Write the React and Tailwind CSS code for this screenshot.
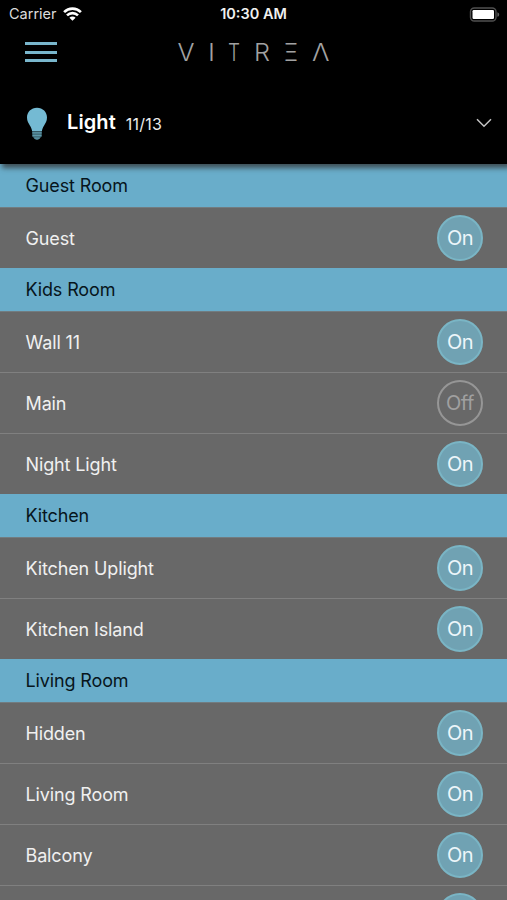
import clsx from 'clsx';

const rooms = [
    { name: 'Guest Room', lights: [{ name: 'Guest', on: true }] },
    {
        name: 'Kids Room',
        lights: [
            { name: 'Wall 11', on: true },
            { name: 'Main', on: false },
            { name: 'Night Light', on: true },
        ],
    },
    {
        name: 'Kitchen',
        lights: [
            { name: 'Kitchen Uplight', on: true },
            { name: 'Kitchen Island', on: true },
        ],
    },
    {
        name: 'Living Room',
        lights: [
            { name: 'Hidden', on: true },
            { name: 'Living Room', on: true },
            { name: 'Balcony', on: true },
            { name: '', on: true },
        ],
    },
];

// x and drawn width of each letter in the wordmark
const wordmark = [
    { char: 'V', x: 1.5, width: 17 },
    { char: 'I', x: 32, width: 7 },
    { char: 'T', x: 52, width: 12 },
    { char: 'R', x: 78, width: 16 },
    { char: 'Ξ', x: 108, width: 14 },
    { char: 'Λ', x: 136, width: 17.5 },
];

function StatusBar() {
    return (
        <div className="grid h-7 grid-cols-3 items-center pr-[7px] pl-[9px] text-[14.5px] leading-7">
            <div className="flex items-center gap-[6px] text-[#dcdcdc]">
                <span>Carrier</span>
                <svg width="19" height="14" viewBox="0 0 19 14" fill="none" stroke="#fff" strokeWidth="2.6">
                    <path d="M1.1 5.1a11.9 11.9 0 0 1 16.8 0" />
                    <path d="M4 8.4a7.8 7.8 0 0 1 11 0" />
                    <path d="M9.5 13.8 6.4 10.700a4.400 4.400 0 0 1 6.200 0z" fill="#fff" stroke="none" />
                </svg>
            </div>
            <span className="-ml-[2px] text-center text-[14.5px] font-semibold text-[#f0f0f0]">10:30 AM</span>
            <svg className="justify-self-end" width="31" height="15" viewBox="0 0 31 15">
                <rect x="1.500" y="1" width="25.500" height="13" rx="3.800" fill="none" stroke="#505050" strokeWidth="1.400" />
                <rect x="3.500" y="3" width="21.500" height="9" rx="1.200" fill="#fff" />
                <path d="M28.400 5.200c2.400.8 2.400 3.800 0 4.600z" fill="#606060" />
            </svg>
        </div>
    );
}

function Wordmark() {
    return (
        <svg className="overflow-visible" width="156" height="36" viewBox="0 0 156 36" role="img" aria-label="Vitrea">
            {wordmark.map(({ char, x, width }) => (
                <text
                    key={char}
                    x={x}
                    y="27.3"
                    textLength={width}
                    lengthAdjust="spacingAndGlyphs"
                    className="fill-[#a2a2a2] text-[24.5px] font-light"
                >
                    {char}
                </text>
            ))}
        </svg>
    );
}

function BulbIcon() {
    return (
        <svg width="22" height="34" viewBox="0 0 22 34">
            <path
                d="M11 .8C5.200.8 1 5 1 10.600c0 3.400 1.500 5.800 3 8.100 1.200 1.900 1.800 3.400 2.100 5.500h9.800c.3-2.100.9-3.600 2.100-5.500 1.500-2.300 3-4.700 3-8.100C21 5 16.800.8 11 .8z"
                fill="#74bad3"
            />
            <path d="M6.300 24.200h9.400v5.300l-2.700 2.500-1 1h-2l-1-1-2.700-2.500z" fill="#3c6470" />
            <path d="M6.300 25.800h9.400M6.500 28.500h9M8.300 31.200h5.400" stroke="#5d98a9" strokeWidth="1.300" />
        </svg>
    );
}

function LightButton({ on }) {
    return (
        <button
            type="button"
            className={clsx(
                'flex size-[46px] shrink-0 items-center justify-center rounded-full border-2 text-[20px] tracking-tight',
                on ? 'border-[#7ab5c5] bg-[#70a2b3] text-[#edf6fa]' : 'border-[#969696] text-[#a0a0a0]'
            )}
        >
            {on ? 'On' : 'Off'}
        </button>
    );
}

export default function App() {
    return (
        <div className="flex h-[900px] w-[507px] flex-col overflow-hidden bg-[#686868] font-['Inter','Liberation_Sans',sans-serif]">
            <header className="relative z-10 h-[164px] shrink-0 bg-black text-white shadow-[3px_3px_5px_1px_rgba(50,50,50,0.75)]">
                <StatusBar />
                <div className="grid h-12 grid-cols-[1fr_156px_1fr] items-center px-[25px]">
                    <button type="button" aria-label="Menu" className="flex w-[32px] flex-col gap-[5.500px]">
                        <span className="h-[3px] bg-[#79b6cc]" />
                        <span className="h-[3px] bg-[#79b6cc]" />
                        <span className="h-[3px] bg-[#79b6cc]" />
                    </button>
                    <Wordmark />
                </div>
                <div className="flex h-24 items-center pr-[15px] pl-[26px]">
                    <BulbIcon />
                    <h1 className="ml-[19px] pb-1 text-[20px] font-semibold tracking-[0.1px]">Light</h1>
                    <span className="ml-[10px] pb-px text-[16px] tracking-[0.2px] text-[#ececec]">11/13</span>
                    <svg className="mb-[3px] ml-auto" width="16" height="10" viewBox="0 0 16 10" fill="none" stroke="#c4c4c4" strokeWidth="1.500">
                        <path d="M1 1.200l7 7 7-7" />
                    </svg>
                </div>
            </header>

            <main>
                {rooms.map((room) => (
                    <section key={room.name}>
                        <h2 className="h-[43px] bg-[#69adca] pl-[25.5px] text-[18px] leading-[43px] tracking-[-0.13px] text-[#07151c]">
                            {room.name}
                        </h2>
                        <ul>
                            {room.lights.map((light, index) => (
                                <li
                                    key={light.name}
                                    className={clsx(
                                        'flex h-[61px] items-center justify-between border-t pr-6 pl-[25.5px] text-[18px] tracking-[-0.13px] text-[#f0f0f0]',
                                        index === 0 ? 'border-[#727c80]' : 'border-[#808080]'
                                    )}
                                >
                                    <span>{light.name}</span>
                                    <LightButton on={light.on} />
                                </li>
                            ))}
                        </ul>
                    </section>
                ))}
            </main>
        </div>
    );
}
